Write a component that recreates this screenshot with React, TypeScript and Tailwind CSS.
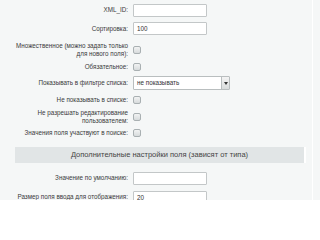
import React from 'react';

const font = { fontFamily: '"Liberation Sans", Arial, sans-serif' };

const Label: React.FC<{ children: React.ReactNode }> = ({ children }) => (
  <div className="w-[133px] shrink-0 pl-[10px] pr-[5px] text-right leading-[8px]">{children}</div>
);

const TextInput: React.FC<{ value?: string }> = ({ value }) => (
  <div className="w-[74px] h-[13px] bg-white border border-[#c3c7c8] rounded-[1px] px-[3px] text-[6.3px] leading-[11px] text-[#333]">
    {value}
  </div>
);

const Checkbox = () => (
  <span className="block w-[8px] h-[8px] rounded-[2px] border border-[#a9b0b2] bg-gradient-to-b from-[#f2f3f3] to-[#d7dbdc]" />
);

const Row: React.FC<{ h: string; children: React.ReactNode }> = ({ h, children }) => (
  <div className={`flex items-center ${h}`}>{children}</div>
);

export default function App() {
  return (
    <div className="w-[320px] h-[200px] overflow-hidden bg-[#f5f7f7] text-[#3a3a3a] text-[6.3px]" style={font}>
      <div className="w-[313px] h-full border-r border-white pt-[2px]">
        <Row h="h-[16px]">
          <Label>XML_ID:</Label>
          <TextInput />
        </Row>
        <Row h="h-[21px]">
          <Label>Сортировка:</Label>
          <TextInput value="100" />
        </Row>
        <Row h="h-[22px]">
          <Label>Множественное (можно задать только для нового поля):</Label>
          <Checkbox />
        </Row>
        <Row h="h-[12px]">
          <Label>Обязательное:</Label>
          <Checkbox />
        </Row>
        <Row h="h-[20px]">
          <Label>Показывать в фильтре списка:</Label>
          <div className="flex w-[97px] h-[14px] bg-white border border-[#b9bebf] rounded-[1px]">
            <span className="flex-1 pl-[3px] text-[6.3px] leading-[12px] text-[#333]">не показывать</span>
            <span className="w-[8px] h-full flex items-center justify-center border-l border-[#b9bebf] bg-gradient-to-b from-[#f4f4f4] to-[#d9dcdc]">
              <svg width="4" height="3" viewBox="0 0 4 3">
                <path d="M0 0 L4 0 L2 3 Z" fill="#333" />
              </svg>
            </span>
          </div>
        </Row>
        <Row h="h-[14px]">
          <Label>Не показывать в списке:</Label>
          <Checkbox />
        </Row>
        <Row h="h-[20px]">
          <Label>Не разрешать редактирование пользователем:</Label>
          <Checkbox />
        </Row>
        <Row h="h-[12px]">
          <Label>Значения поля участвуют в поиске:</Label>
          <Checkbox />
        </Row>
        <div className="ml-[15px] mr-[6px] mt-[8px] h-[16px] bg-[#e1e5e6] border-r-2 border-white flex items-center justify-center text-[#444] text-[7.5px]">
          Дополнительные настройки поля (зависят от типа)
        </div>
        <div className="h-[7px]" />
        <Row h="h-[16px]">
          <Label>Значение по умолчанию:</Label>
          <TextInput />
        </Row>
        <Row h="h-[22px]">
          <Label>Размер поля ввода для отображения:</Label>
          <TextInput value="20" />
        </Row>
      </div>
    </div>
  );
}
